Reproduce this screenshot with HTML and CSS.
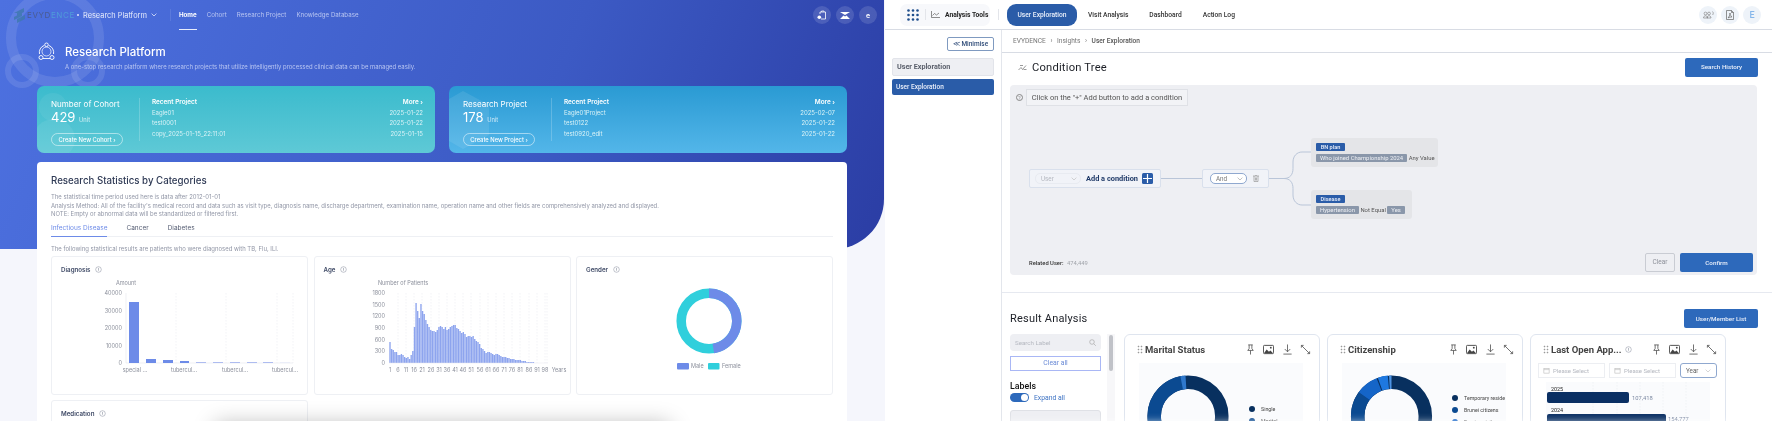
FILE: index.html
```html
<!DOCTYPE html>
<html lang="en">
<head>
    <meta charset="UTF-8">
    <meta name="viewport" content="width=device-width, initial-scale=1.0">
    <title>Research Platform and Condition Tree</title>
    <link rel="stylesheet" href="styles.css">
</head>
<body>
    <svg class="sprites" width="0" height="0">
        <symbol id="i-pin" viewBox="0 0 12 12"><path d="M3.5 1h5M4.5 1v4L3 7h6L7.5 5V1M6 7v4.5" fill="none" stroke="#555" stroke-width=".9"/></symbol>
        <symbol id="i-image" viewBox="0 0 12 12"><rect x=".5" y="1.5" width="11" height="9" rx="1" fill="#fff" stroke="#444"/><path d="M1 10l3-4 2.5 2.500L8 7l3 3z" fill="#444"/><circle cx="8.5" cy="4" r="1" fill="#444"/></symbol>
        <symbol id="i-down" viewBox="0 0 12 12"><path d="M6 .5v8M3 5.5l3 3 3-3M1.5 11h9" fill="none" stroke="#555" stroke-width=".9"/></symbol>
        <symbol id="i-expand" viewBox="0 0 12 12"><path d="M1.5 1.5l9 9M1.5 4V1.5H4M10.5 8v2.500H8" fill="none" stroke="#555" stroke-width=".9"/></symbol>
        <symbol id="i-handle" viewBox="0 0 6 9"><path d="M1 1h1v1H1zM4 1h1v1H4zM1 4h1v1H1zM4 4h1v1H4zM1 7h1v1H1zM4 7h1v1H4z" fill="#999" stroke="#999" stroke-width=".5"/></symbol>
        <symbol id="i-info" viewBox="0 0 8 8"><circle cx="4" cy="4" r="3.2" fill="none" stroke="#8a90a0" stroke-width=".6"/><path d="M4 2.200v3.200" stroke="#8a90a0" stroke-width=".7"/></symbol>
        <symbol id="i-cal" viewBox="0 0 8 8"><rect x="1" y="1.5" width="6" height="5.5" fill="none" stroke="#bbb" stroke-width=".7"/><path d="M1 3h6" stroke="#bbb" stroke-width=".7"/></symbol>
    </svg>

    <section class="portal">
        <div class="hero">
            <svg class="hero-rings" viewBox="0 0 150 110" width="150" height="110">
                <g fill="none" stroke="#fff" stroke-opacity=".1">
                    <circle cx="55" cy="38" r="44" stroke-width="10"/>
                    <circle cx="22" cy="71" r="14" stroke-width="6"/>
                    <circle cx="88" cy="71" r="14" stroke-width="6"/>
                </g>
            </svg>
        </div>

        <header class="pnav">
            <svg class="plogo" width="11" height="15" viewBox="0 0 11 15"><path d="M0 5l10-5v4L3 7.5V5zM0 9l8-4v3l-8 4zM3 11l8-4v4l-8 4z" fill="#3f78b0" fill-opacity=".85"/></svg>
            <span class="pbrand"><b>EVYD</b>ENCE</span>
            <span class="pdot"></span>
            <span class="pproduct">Research Platform</span>
            <svg class="pchev" width="6" height="4" viewBox="0 0 6 4"><path d="M.6.6L3 3l2.4-2.400" fill="none" stroke="#dfe6fb" stroke-width=".8"/></svg>
            <span class="pdivider"></span>
            <nav class="plinks">
                <a class="plink active">Home</a>
                <a class="plink">Cohort</a>
                <a class="plink">Research Project</a>
                <a class="plink">Knowledge Database</a>
            </nav>
            <div class="pround-group">
                <span class="pround"><svg width="10" height="10" viewBox="0 0 10 10"><path d="M3 4V2h5.500v7H4" fill="none" stroke="#fff" stroke-width=".8"/><path d="M4.5 2V1h2.500v1" fill="none" stroke="#fff" stroke-width=".7"/><circle cx="2.3" cy="7.3" r="1.8" fill="#fff"/></svg></span>
                <span class="pround"><svg width="10" height="7" viewBox="0 0 10 7"><path d="M0 0h10L5 3zM0 7l3.500-3.500L5 4.500l1.500-1L10 7z" fill="#fff"/></svg></span>
                <span class="pround">e</span>
            </div>
        </header>

        <div class="hero-head">
            <svg width="19" height="19" viewBox="0 0 19 19" fill="none" stroke="#fff" stroke-width=".9">
                <path d="M7 3.500A7.500 7.500 0 0 0 2.500 12M12 3.500A7.500 7.500 0 0 1 16.500 12M6 16.500h7"/>
                <circle cx="9.5" cy="2.8" r="1.8"/><circle cx="4" cy="15.5" r="2"/><circle cx="15" cy="15.5" r="2"/>
                <circle cx="9.5" cy="9.5" r="4.5" stroke-opacity=".8"/>
            </svg>
            <div>
                <h1 class="hero-title">Research Platform</h1>
                <p class="hero-sub">A one-stop research platform where research projects that utilize intelligently processed clinical data can be managed easily.</p>
            </div>
        </div>

        <div class="stat-row">
            <div class="stat-card cohort">
                <div class="stat-left">
                    <div class="stat-name">Number of Cohort</div>
                    <div class="stat-num">429 <small>Unit</small></div>
                    <span class="stat-btn">Create New Cohort ›</span>
                </div>
                <span class="stat-line"></span>
                <div class="stat-right">
                    <div class="stat-rowline head"><span>Recent Project</span><span>More ›</span></div>
                    <div class="stat-rowline"><span>Eagle01</span><span>2025-01-22</span></div>
                    <div class="stat-rowline"><span>test0001</span><span>2025-01-22</span></div>
                    <div class="stat-rowline"><span>copy_2025-01-15_22:11:01</span><span>2025-01-15</span></div>
                </div>
            </div>
            <div class="stat-card project">
                <svg class="stat-hex" width="40" height="58" viewBox="0 0 40 58"><path d="M14 0l26 14v30L14 58 0 50V8z" fill="#fff" fill-opacity=".09"/></svg>
                <div class="stat-left">
                    <div class="stat-name">Research Project</div>
                    <div class="stat-num">178 <small>Unit</small></div>
                    <span class="stat-btn">Create New Project ›</span>
                </div>
                <span class="stat-line"></span>
                <div class="stat-right">
                    <div class="stat-rowline head"><span>Recent Project</span><span>More ›</span></div>
                    <div class="stat-rowline"><span>Eagle01Project</span><span>2025-02-07</span></div>
                    <div class="stat-rowline"><span>test0122</span><span>2025-01-22</span></div>
                    <div class="stat-rowline"><span>test0920_edit</span><span>2025-01-22</span></div>
                </div>
            </div>
        </div>

        <div class="stats-panel">
            <h2 class="stats-title">Research Statistics by Categories</h2>
            <p class="stats-notes">The statistical time period used here is data after 2012-01-01<br>
            Analysis Method: All of the facility's medical record and data such as visit type, diagnosis name, discharge department, examination name, operation name and other fields are comprehensively analyzed and displayed.<br>
            NOTE: Empty or abnormal data will be standardized or filtered first.</p>
            <div class="stats-tabs">
                <span class="stats-tab active">Infectious Disease</span>
                <span class="stats-tab">Cancer</span>
                <span class="stats-tab">Diabetes</span>
            </div>
            <p class="stats-caption">The following statistical results are patients who were diagnosed with TB, Flu, ILI.</p>
            <div class="chart-grid">
                <div class="chart-card">
                    <div class="chart-name">Diagnosis <svg width="7" height="7"><use href="#i-info"/></svg></div>
                    <svg class="chart-svg" viewBox="52 276 255 118" width="255" height="118">
                        <path stroke="#e4e6ec" stroke-width=".5" stroke-dasharray="1.5 1.5" d="M176 293v70M226 293v70M277 293v70M293 293v70"/>
                        <path d="M126 293v70h167" fill="none" stroke="#e4e6ec" stroke-width=".6"/>
                        <g fill="#6d8be8">
                            <rect x="129" y="302" width="10" height="61"/>
                            <rect x="146" y="359" width="10" height="4"/>
                            <rect x="163" y="360" width="10" height="3"/>
                            <rect x="180" y="361" width="9" height="2"/>
                        </g>
                        <g fill="#aebcf0">
                            <rect x="196" y="362" width="10" height="1"/>
                            <rect x="213" y="362" width="10" height="1"/>
                            <rect x="230" y="362" width="10" height="1"/>
                            <rect x="247" y="362" width="10" height="1"/>
                            <rect x="263" y="362" width="10" height="1"/>
                            <rect x="280" y="362.5" width="10" height=".5" fill="#dfe4f8"/>
                        </g>
                        <g class="axis-text">
                            <text x="126" y="285" text-anchor="middle">Amount</text>
                            <g text-anchor="end">
                                <text x="122" y="295">40000</text>
                                <text x="122" y="312.5">30000</text>
                                <text x="122" y="330">20000</text>
                                <text x="122" y="347.5">10000</text>
                                <text x="122" y="365">0</text>
                            </g>
                            <g text-anchor="middle">
                                <text x="135" y="372">special ...</text>
                                <text x="184" y="372">tubercul...</text>
                                <text x="235" y="372">tubercul...</text>
                                <text x="285" y="372">tubercul...</text>
                            </g>
                        </g>
                    </svg>
                </div>
                <div class="chart-card">
                    <div class="chart-name">Age <svg width="7" height="7"><use href="#i-info"/></svg></div>
                    <svg class="chart-svg" viewBox="314 276 255 118" width="255" height="118">
                        <path stroke="#e4e6ec" stroke-width=".5" stroke-dasharray="1.5 1.5" d="M397 293v70M405 293v70M413 293v70M421 293v70M430 293v70M438 293v70M446 293v70M454 293v70M462 293v70M470 293v70M479 293v70M487 293v70M495 293v70M503 293v70M511 293v70M519 293v70M528 293v70M536 293v70M544 293v70M546 293v70"/>
                        <path stroke="#8da4ee" stroke-width="1.35" fill="none" d="M389 363v-21m1.63 21v-14m1.63 14v-13m1.63 13v-11m1.63 11v-11m1.63 11v-8m1.63 8v-8m1.63 8v-9m1.63 9v-8m1.63 8v-6m1.63 6v-5m1.63 5v-6m1.63 6v-4m1.63 4v-8m1.63 8v-12m1.63 12v-36m1.63 36v-60m1.63 60v-52m1.63 52v-45m1.63 45v-59m1.63 59v-52m1.63 52v-49m1.63 49v-43m1.63 43v-39m1.63 39v-36m1.63 36v-33m1.63 33v-32m1.63 32v-32m1.63 32v-31m1.63 31v-33m1.63 33v-36m1.63 36v-37m1.63 37v-36m1.63 36v-34m1.63 34v-36m1.63 36v-33m1.63 33v-34m1.63 34v-36m1.63 36v-37m1.63 37v-38m1.63 38v-38m1.63 38v-35m1.63 35v-34m1.63 34v-32m1.63 32v-30m1.63 30v-31m1.63 31v-29m1.63 29v-26m1.63 26v-27m1.63 27v-27m1.63 27v-26m1.63 26v-27m1.63 27v-24m1.63 24v-22m1.63 22v-21m1.63 21v-19m1.63 19v-15m1.63 15v-14m1.63 14v-12m1.63 12v-10m1.63 10v-11m1.63 11v-11m1.63 11v-10m1.63 10v-9m1.63 9v-8m1.63 8v-9m1.63 9v-9m1.63 9v-8m1.63 8v-7m1.63 7v-6m1.63 6v-6m1.63 6v-6m1.63 6v-5m1.63 5v-5m1.63 5v-4m1.63 4v-4m1.63 4v-4m1.63 4v-3m1.63 3v-3m1.63 3v-3m1.63 3v-3m1.63 3v-2m1.63 2v-2m1.63 2v-2m1.63 2v-1m1.63 1v-1m1.63 1v-1m1.63 1v-1m1.63 1v-1"/>
                        <path d="M388 363h159" stroke="#e4e6ec" stroke-width=".5"/>
                        <g class="axis-text">
                            <text x="402" y="285" text-anchor="middle">Number of Patients</text>
                            <g text-anchor="end">
                                <text x="384" y="295">1800</text>
                                <text x="384" y="306.7">1500</text>
                                <text x="384" y="318.3">1200</text>
                                <text x="384" y="330">900</text>
                                <text x="384" y="341.5">600</text>
                                <text x="384" y="353.2">300</text>
                                <text x="384" y="365">0</text>
                            </g>
                            <g text-anchor="middle">
                                <text x="389" y="372">1</text><text x="397" y="372">6</text><text x="405" y="372">11</text><text x="413" y="372">16</text><text x="421" y="372">21</text><text x="430" y="372">26</text><text x="438" y="372">31</text><text x="446" y="372">36</text><text x="454" y="372">41</text><text x="462" y="372">46</text><text x="470" y="372">51</text><text x="479" y="372">56</text><text x="487" y="372">61</text><text x="495" y="372">66</text><text x="503" y="372">71</text><text x="511" y="372">76</text><text x="519" y="372">81</text><text x="528" y="372">86</text><text x="536" y="372">91</text><text x="544" y="372">98</text><text x="558" y="372">Years</text>
                            </g>
                        </g>
                    </svg>
                </div>
                <div class="chart-card">
                    <div class="chart-name">Gender <svg width="7" height="7"><use href="#i-info"/></svg></div>
                    <svg class="chart-svg" viewBox="577 276 255 118" width="255" height="118">
                        <circle cx="709" cy="321" r="27.8" fill="none" stroke="#30cfdc" stroke-width="9.5"/>
                        <circle cx="709" cy="321" r="27.8" fill="none" stroke="#6d8be8" stroke-width="9.5" pathLength="100" stroke-dasharray="47.5 100" transform="rotate(-90 709 321)"/>
                        <rect x="677" y="363" width="12" height="6.5" rx="1" fill="#6d8be8"/>
                        <rect x="708" y="363" width="11.5" height="6.5" rx="1" fill="#30cfdc"/>
                        <g class="axis-text">
                            <text x="691" y="368">Male</text>
                            <text x="722" y="368">Female</text>
                        </g>
                    </svg>
                </div>
                <div class="chart-card">
                    <div class="chart-name">Medication <svg width="7" height="7"><use href="#i-info"/></svg></div>
                </div>
            </div>
        </div>
        <div class="shade-grey"></div>
    </section>

    <section class="insight">
        <header class="inav">
            <div class="tool-chip">
                <svg width="12" height="12" viewBox="0 0 12 12" fill="#1f4e8c"><circle cx="1.5" cy="1.5" r="1.3"/><circle cx="6" cy="1.5" r="1.3"/><circle cx="10.5" cy="1.5" r="1.3"/><circle cx="1.5" cy="6" r="1.3"/><circle cx="6" cy="6" r="1.3"/><circle cx="10.5" cy="6" r="1.3"/><circle cx="1.5" cy="10.5" r="1.3"/><circle cx="6" cy="10.5" r="1.3"/><circle cx="10.5" cy="10.5" r="1.3"/></svg>
                <span class="tool-sep"></span>
                <svg width="9" height="7" viewBox="0 0 9 7" fill="none" stroke="#444" stroke-width=".6"><path d="M.5 0v6.5H9M1.5 4.5l2-2 2 1.5L8 2"/></svg>
                <b>Analysis Tools</b>
            </div>
            <span class="inav-sep"></span>
            <a class="inav-link active">User Exploration</a>
            <a class="inav-link">Visit Analysis</a>
            <a class="inav-link">Dashboard</a>
            <a class="inav-link">Action Log</a>
            <div class="iround-group">
                <span class="iround"><svg width="11" height="8" viewBox="0 0 11 8" fill="none" stroke="#777" stroke-width=".6"><circle cx="2.5" cy="2.5" r="1.4"/><circle cx="6" cy="2.5" r="1.4"/><path d="M.5 7c0-3 4-3 4 0zM4 7c0-3 4-3 4 0z"/><path d="M9.5 .5c1 1 1 2.5 0 3.5"/></svg></span>
                <span class="iround"><svg width="8" height="10" viewBox="0 0 8 10" fill="none" stroke="#666" stroke-width=".7"><path d="M.5.5h5l2 2v7h-7zM5.5.5v2h2M2 8c1-1 2-3 2-5 0 2 1 3 2 4-1 0-3 0-4 1z"/></svg></span>
                <span class="iround letter">E</span>
            </div>
        </header>
        <div class="ibody">
            <aside class="iside">
                <span class="minimise">≪ Minimise</span>
                <div class="side-group">User Exploration</div>
                <div class="side-item">User Exploration</div>
            </aside>
            <main class="imain">
                <div class="crumbs">EVYDENCE <i>›</i> Insights <i>›</i> <b>User Exploration</b></div>
                <div class="tree-head">
                    <svg width="9" height="7" viewBox="0 0 9 7" fill="none" stroke="#555" stroke-width=".6"><path d="M.5 6L3 3.5l1.5 2L8 1.5M2 1.5h3M5.5 5.5h3"/></svg>
                    <h2>Condition Tree</h2>
                    <span class="blue-btn history">Search History</span>
                </div>
                <div class="tree-panel">
                    <div class="tree-hint">
                        <span class="help-dot">?</span>
                        <span class="hint-box">Click on the "+" Add button to add a condition</span>
                    </div>
                    <div class="tree-canvas">
                        <svg class="tree-lines" width="747" height="147" viewBox="0 0 747 147" fill="none" stroke="#b9c5d8" stroke-width="1">
                            <path d="M150 72.5h42M259 72.5h15c6 0 9-4 9-10V56c0-6 4-10 9-10h9M274 72.5c6 0 9 4 9 10V89c0 6 4 10 9 10h9"/>
                        </svg>
                        <div class="tree-node add-node">
                            <span class="mini-select dim">User <svg width="6" height="4" viewBox="0 0 6 4"><path d="M.6.6L3 3l2.4-2.400" fill="none" stroke="#bbb" stroke-width=".6"/></svg></span>
                            <b>Add a condition</b>
                            <span class="plus-btn"><svg width="9" height="9" viewBox="0 0 9 9"><path d="M4.5 0v9M0 4.5h9" stroke="#fff" stroke-width="1.2"/></svg></span>
                        </div>
                        <div class="tree-node and-node">
                            <span class="mini-select and">And <svg width="6" height="4" viewBox="0 0 6 4"><path d="M.6.6L3 3l2.4-2.400" fill="none" stroke="#999" stroke-width=".6"/></svg></span>
                            <svg width="6" height="7" viewBox="0 0 6 7" fill="none" stroke="#999" stroke-width=".7"><path d="M0 1h6M1 1v5.500h4V1M2 .3h2M2.500 2.500v3M3.500 2.500v3"/></svg>
                        </div>
                        <div class="cond-group first">
                            <span class="cond-tag">BN plan</span>
                            <div class="cond-line"><span class="cond-grey">Who joined Championship 2024</span> Any Value</div>
                        </div>
                        <div class="cond-group second">
                            <span class="cond-tag">Disease</span>
                            <div class="cond-line"><span class="cond-grey">Hypertension</span> Not Equal <span class="cond-grey">Yes</span></div>
                        </div>
                    </div>
                    <div class="tree-foot">
                        <span class="related"><b>Related User:</b> 474,449</span>
                        <span class="clear-btn">Clear</span>
                        <span class="blue-btn confirm">Confirm</span>
                    </div>
                </div>
                <div class="result-head">
                    <h2>Result Analysis</h2>
                    <span class="blue-btn member">User/Member List</span>
                </div>
                <div class="result-body">
                    <div class="label-col">
                        <div class="label-search">Search Label <svg width="7" height="7" viewBox="0 0 7 7" fill="none" stroke="#aaa" stroke-width=".7"><circle cx="3" cy="3" r="2.3"/><path d="M4.7 4.7L6.800 6.800"/></svg></div>
                        <div class="label-clear">Clear all</div>
                        <div class="label-title">Labels</div>
                        <div class="label-toggle"><span class="toggle"></span> Expand all</div>
                        <div class="label-box"></div>
                    </div>
                    <div class="label-scroll"><span></span></div>
                    <div class="result-card">
                        <div class="result-name">
                            <svg width="6" height="9"><use href="#i-handle"/></svg>
                            <b>Marital Status</b>
                            <div class="result-tools">
                                <svg width="11" height="11"><use href="#i-pin"/></svg><svg width="11" height="11"><use href="#i-image"/></svg><svg width="11" height="11"><use href="#i-down"/></svg><svg width="11" height="11"><use href="#i-expand"/></svg>
                            </div>
                        </div>
                        <div class="result-chart">
                            <svg viewBox="1140 363 164 58" width="164" height="58">
                                <g fill="none" stroke-width="13.5" transform="rotate(-90 1189 416)" >
                                    <circle cx="1189" cy="416" r="33.8" stroke="#08305f"/>
                                    <circle cx="1189" cy="416" r="33.8" stroke="#0b4a91" pathLength="100" stroke-dasharray="49 100" stroke-dashoffset="-49"/>
                                    <circle cx="1189" cy="416" r="33.8" stroke="#2f78cc" pathLength="100" stroke-dasharray="2 100" stroke-dashoffset="-97"/>
                                </g>
                                <circle cx="1253" cy="409" r="3" fill="#08305f"/><circle cx="1253" cy="421" r="3" fill="#0b4a91"/>
                                <text class="legend-text" x="1262" y="411">Single</text>
                                <text class="legend-text" x="1262" y="423">Marital</text>
                            </svg>
                        </div>
                    </div>
                    <div class="result-card">
                        <div class="result-name">
                            <svg width="6" height="9"><use href="#i-handle"/></svg>
                            <b>Citizenship</b>
                            <div class="result-tools">
                                <svg width="11" height="11"><use href="#i-pin"/></svg><svg width="11" height="11"><use href="#i-image"/></svg><svg width="11" height="11"><use href="#i-down"/></svg><svg width="11" height="11"><use href="#i-expand"/></svg>
                            </div>
                        </div>
                        <div class="result-chart">
                            <svg viewBox="1343 363 164 58" width="164" height="58">
                                <g fill="none" stroke-width="13.5" transform="rotate(-90 1392.5 416)">
                                    <circle cx="1392.5" cy="416" r="33.8" stroke="#08305f"/>
                                    <circle cx="1392.5" cy="416" r="33.8" stroke="#0b4a91" pathLength="100" stroke-dasharray="35 100" stroke-dashoffset="-50"/>
                                    <circle cx="1392.5" cy="416" r="33.8" stroke="#1565c8" pathLength="100" stroke-dasharray="9 100" stroke-dashoffset="-85"/>
                                    <circle cx="1392.5" cy="416" r="33.8" stroke="#1e78e0" pathLength="100" stroke-dasharray="4 100" stroke-dashoffset="-94.5"/>
                                    <circle cx="1392.5" cy="416" r="33.8" stroke="#4d94e6" pathLength="100" stroke-dasharray="1 100" stroke-dashoffset="-99"/>
                                </g>
                                <circle cx="1456" cy="398" r="3" fill="#08305f"/><circle cx="1456" cy="410" r="3" fill="#0b4a91"/><circle cx="1456" cy="422" r="3" fill="#1565c8"/>
                                <text class="legend-text" x="1465" y="400">Temporary reside</text>
                                <text class="legend-text" x="1465" y="412">Brunei citizens</text>
                                <text class="legend-text" x="1465" y="424">Foreign visitors</text>
                            </svg>
                        </div>
                    </div>
                    <div class="result-card">
                        <div class="result-name">
                            <svg width="6" height="9"><use href="#i-handle"/></svg>
                            <b>Last Open App...</b>
                            <svg width="7" height="7"><use href="#i-info"/></svg>
                            <div class="result-tools">
                                <svg width="11" height="11"><use href="#i-pin"/></svg><svg width="11" height="11"><use href="#i-image"/></svg><svg width="11" height="11"><use href="#i-down"/></svg><svg width="11" height="11"><use href="#i-expand"/></svg>
                            </div>
                        </div>
                        <div class="date-row">
                            <span class="date-box"><svg width="7" height="7"><use href="#i-cal"/></svg> Please Select</span>
                            <span class="date-box"><svg width="7" height="7"><use href="#i-cal"/></svg> Please Select</span>
                            <span class="year-box">Year <svg width="6" height="4" viewBox="0 0 6 4"><path d="M.6.6L3 3l2.4-2.400" fill="none" stroke="#bbb" stroke-width=".6"/></svg></span>
                        </div>
                        <div class="result-chart bars">
                            <svg viewBox="1547 382 164 39" width="164" height="39">
                                <path d="M1594 382v39M1618 382v39M1641 382v39M1664 382v39M1687 382v39" stroke="#e6e8ee" stroke-width=".5" stroke-dasharray="1.5 1.5"/>
                                <rect x="1548" y="392" width="82" height="11" rx="2" fill="#0a2f63"/>
                                <rect x="1548" y="414" width="119" height="11" rx="2" fill="#0a2f63"/>
                                <text class="bar-year" x="1552" y="390.5">2025</text>
                                <text class="bar-year" x="1552" y="411.5">2024</text>
                                <text class="bar-value" x="1633" y="400">107,418</text>
                                <text class="bar-value" x="1669" y="421">154,777</text>
                            </svg>
                        </div>
                    </div>
                </div>
            </main>
        </div>
        <div class="shade-white"></div>
    </section>
</body>
</html>
```

FILE: styles.css
```css
* {
    box-sizing: border-box;
}
html, body {
    margin: 0;
    height: 421px;
    overflow: hidden;
}
body {
    display: flex;
    background-color: #fff;
}
h1, h2, p {
    margin: 0;
    font-weight: normal;
}
.sprites {
    position: absolute;
}

/* left screen */
.portal {
    position: relative;
    flex: 0 0 885px;
    height: 421px;
    overflow: hidden;
    background-color: #f5f6fc;
    font-family: Inter, sans-serif;
    filter: blur(.35px);
}
.hero {
    position: absolute;
    left: 0;
    top: 0;
    width: 884px;
    height: 249px;
    overflow: hidden;
    background: linear-gradient(112deg, #4d71e0 0%, #3c5ac4 60%, #2b3da4 100%);
    border-bottom-right-radius: 50px;
}
.hero-rings {
    position: absolute;
    left: 0;
    top: 0;
}
.pnav {
    position: relative;
    display: flex;
    align-items: center;
    height: 30px;
    padding: 0 8px 0 14px;
    color: #fff;
}
.pbrand {
    width: 46px;
    margin-left: 2px;
    font-size: 8px;
    letter-spacing: .6px;
    color: #4f9bd9;
    white-space: nowrap;
}
.pbrand b {
    font-weight: 400;
    color: #4a5c92;
}
.pdot {
    width: 2px;
    height: 2px;
    margin: 0 4px 0 4px;
    border-radius: 50%;
    background-color: #dfe6fb;
}
.pproduct {
    font-size: 7.4px;
    color: #e7ecfc;
}
.pchev {
    margin-left: 4px;
}
.pdivider {
    width: 1px;
    height: 12px;
    margin: 0 8px 0 13px;
    background-color: rgba(255, 255, 255, .1);
}
.plinks {
    display: flex;
    gap: 10px;
    height: 30px;
}
.plink {
    line-height: 29px;
    font-size: 6.2px;
    color: #b9c6f2;
}
.plink.active {
    height: 29.5px;
    border-bottom: 1px solid #e8edfc;
    font-weight: 700;
    color: #fff;
}
.pround-group {
    display: flex;
    gap: 5px;
    margin-left: auto;
}
.pround {
    display: flex;
    align-items: center;
    justify-content: center;
    width: 18px;
    height: 18px;
    border-radius: 50%;
    background-color: rgba(255, 255, 255, .13);
    font-size: 7px;
    font-weight: 600;
}
.hero-head {
    position: relative;
    display: flex;
    gap: 9px;
    padding: 12px 0 0 37px;
    color: #fff;
}
.hero-title {
    margin-top: 2px;
    line-height: 16px;
    font-size: 11.5px;
    font-weight: 500;
}
.hero-sub {
    margin-top: 3px;
    line-height: 8px;
    font-size: 5.95px;
    color: #b9c6f2;
}
.stat-row {
    position: relative;
    display: flex;
    gap: 14px;
    padding-left: 37px;
    margin-top: 15px;
}
.stat-card {
    position: relative;
    display: flex;
    width: 398px;
    height: 67px;
    overflow: hidden;
    border-radius: 7px;
    color: #fff;
}
.stat-card.cohort {
    background: linear-gradient(180deg, #3bbbcd, #5ec9d6);
}
.stat-card.project {
    background: linear-gradient(180deg, #2a9ad3, #53b6e9);
}
.stat-card.cohort::before {
    content: "";
    position: absolute;
    left: 2px;
    top: 7px;
    width: 28px;
    height: 28px;
    border-radius: 50%;
    background-color: rgba(255, 255, 255, .06);
}
.stat-card.cohort::after {
    content: "";
    position: absolute;
    left: -4px;
    top: 33px;
    width: 42px;
    height: 40px;
    border-radius: 50%;
    background-color: rgba(255, 255, 255, .07);
}
.stat-hex {
    position: absolute;
    left: 0;
    top: 5px;
}
.stat-left {
    position: relative;
    z-index: 1;
    flex: 0 0 102px;
    padding: 12px 0 0 14px;
}
.stat-name {
    line-height: 12px;
    font-size: 8px;
    white-space: nowrap;
}
.stat-num {
    line-height: 15px;
    font-size: 13px;
    font-weight: 400;
}
.stat-num small {
    font-size: 5.8px;
    opacity: .75;
}
.stat-btn {
    display: block;
    width: 72px;
    height: 13px;
    margin-top: 6px;
    border: 1px solid rgba(255, 255, 255, .5);
    border-radius: 7px;
    line-height: 11px;
    text-align: center;
    font-size: 5.8px;
    font-weight: 500;
    white-space: nowrap;
}
.stat-line {
    flex: 0 0 1px;
    height: 43px;
    margin-top: 12px;
    background-color: rgba(255, 255, 255, .2);
}
.stat-right {
    flex: 1;
    padding: 11px 12px 0;
}
.stat-rowline {
    display: flex;
    justify-content: space-between;
    line-height: 10.7px;
    font-size: 6px;
    color: #d9f2f6;
}
.stat-rowline.head {
    font-size: 6.4px;
    font-weight: 600;
    color: #fff;
}
.stats-panel {
    position: relative;
    width: 810px;
    margin: 9px 0 0 37px;
    padding: 13px 14px 0;
    border-radius: 4px 4px 0 0;
    background-color: #fff;
}
.stats-title {
    line-height: 12px;
    font-size: 9.7px;
    font-weight: 500;
    color: #2f3a55;
}
.stats-notes {
    margin-top: 6px;
    line-height: 8.6px;
    font-size: 5.93px;
    color: #9196a6;
    white-space: nowrap;
}
.stats-tabs {
    display: flex;
    gap: 19px;
    height: 18px;
    border-bottom: 1px solid #eef0f4;
}
.stats-tab {
    height: 18px;
    line-height: 18px;
    font-size: 6.5px;
    color: #545c72;
}
.stats-tab.active {
    border-bottom: 1px solid #6d8be8;
    color: #6d8be8;
}
.stats-caption {
    margin-top: 8px;
    line-height: 8px;
    font-size: 5.95px;
    color: #9196a6;
}
.chart-grid {
    display: grid;
    grid-template-columns: repeat(3, 257px);
    grid-auto-rows: 139px;
    gap: 5px 5.5px;
    margin-top: 3px;
}
.chart-card {
    border: 1px solid #eef0f4;
    border-radius: 3px;
}
.chart-name {
    display: flex;
    align-items: center;
    gap: 5px;
    height: 19px;
    padding: 8px 0 1px 9px;
    line-height: 10px;
    font-size: 6.2px;
    font-weight: 600;
    color: #3f4a66;
}
.chart-svg {
    display: block;
}
.axis-text text {
    font-family: Inter, sans-serif;
    font-size: 5.5px;
    fill: #8b8f9b;
}
.shade-grey {
    position: absolute;
    left: 215px;
    top: 424px;
    width: 455px;
    height: 30px;
    box-shadow: 0 0 22px rgba(0, 0, 0, .28);
}

/* right screen */
.insight {
    position: relative;
    flex: 0 0 887px;
    height: 421px;
    overflow: hidden;
    background-color: #fff;
    font-family: Roboto, sans-serif;
    filter: blur(.35px);
}
.inav {
    display: flex;
    align-items: center;
    height: 30px;
    padding: 0 11px 0 15px;
    border-bottom: 1px solid #d8dce4;
}
.tool-chip {
    display: flex;
    align-items: center;
    width: 90px;
    height: 22px;
    padding-left: 7px;
    border-radius: 7px;
    background-color: #f7f8fb;
    font-size: 6.7px;
    color: #222;
}
.tool-chip b {
    margin-left: 5px;
    font-weight: 700;
    white-space: nowrap;
}
.tool-sep {
    width: 1px;
    height: 11px;
    margin: 0 5px 0 6px;
    background-color: #e3e5ea;
}
.inav-sep {
    width: 1px;
    height: 11px;
    margin: 0 8px;
    background-color: #e3e5ea;
}
.inav-link {
    display: flex;
    align-items: center;
    height: 22px;
    margin-right: 21px;
    font-size: 6.7px;
    font-weight: 500;
    color: #333;
    white-space: nowrap;
}
.inav-link.active {
    width: 70px;
    justify-content: center;
    margin-right: 11px;
    border-radius: 9px;
    background-color: #2a5ca8;
    color: #e9effa;
}
.iround-group {
    display: flex;
    gap: 4px;
    margin-left: auto;
}
.iround {
    display: flex;
    align-items: center;
    justify-content: center;
    width: 18px;
    height: 18px;
    border-radius: 50%;
    background-color: #eef3f9;
}
.iround.letter {
    font-size: 9px;
    font-weight: 500;
    color: #86b6ea;
}
.ibody {
    display: flex;
    height: 391px;
}
.iside {
    flex: 0 0 117px;
    display: flex;
    flex-direction: column;
    padding: 7px 7px 0 7px;
    border-right: 1px solid #e3e6ec;
}
.minimise {
    align-self: flex-end;
    width: 47px;
    height: 14px;
    border: 1px solid #7f9ac0;
    border-radius: 2px;
    line-height: 12px;
    text-align: center;
    font-size: 6.5px;
    font-weight: 500;
    color: #34507c;
}
.side-group {
    height: 18px;
    margin-top: 7px;
    padding-left: 4px;
    border: 1px solid #e2e4ea;
    border-radius: 2px;
    background-color: #eeeff3;
    line-height: 16px;
    font-size: 7.2px;
    font-weight: 700;
    color: #5a5f6b;
}
.side-item {
    height: 16px;
    margin-top: 3px;
    padding-left: 4px;
    border-radius: 2px;
    background-color: #2a5ca8;
    line-height: 16px;
    font-size: 6.5px;
    font-weight: 500;
    color: #e9effa;
}
.imain {
    flex: 1;
    min-width: 0;
}
.crumbs {
    height: 23px;
    padding: 0 0 0 11px;
    border-bottom: 1px solid #d8dce4;
    line-height: 22px;
    font-size: 6.6px;
    color: #777;
}
.crumbs i {
    margin: 0 3px;
    font-style: normal;
}
.crumbs b {
    font-weight: 500;
    color: #555;
}
.tree-head {
    display: flex;
    align-items: center;
    height: 32px;
    padding: 0 14px 4px 16px;
}
.tree-head h2 {
    margin-left: 5px;
    font-size: 11.2px;
    letter-spacing: .2px;
    color: #1c1f26;
}
.blue-btn {
    display: flex;
    align-items: center;
    justify-content: center;
    height: 19px;
    border-radius: 2px;
    background-color: #2d69bb;
    font-size: 6.25px;
    font-weight: 500;
    color: #e9effa;
}
.history {
    width: 73px;
    margin-left: auto;
}
.tree-panel {
    display: flex;
    flex-direction: column;
    width: 747px;
    height: 190px;
    margin-left: 8px;
    padding: 4px 0 3px;
    border-radius: 4px;
    background-color: #eeeff3;
}
.tree-hint {
    display: flex;
    align-items: center;
    gap: 3px;
    height: 17px;
    margin-left: 6px;
}
.help-dot {
    width: 7px;
    height: 7px;
    border: .6px solid #888;
    border-radius: 50%;
    line-height: 6px;
    text-align: center;
    font-size: 5px;
    color: #888;
}
.hint-box {
    width: 162px;
    height: 17px;
    border: 1px solid #dfe1e6;
    background-color: #f2f3f6;
    line-height: 15px;
    text-align: center;
    font-size: 7.5px;
    color: #555;
    white-space: nowrap;
}
.tree-canvas {
    position: relative;
    height: 147px;
}
.tree-lines {
    position: absolute;
    left: 0;
    top: 0;
}
.tree-node {
    position: absolute;
    top: 63px;
    height: 19px;
    display: flex;
    align-items: center;
    border: 1px solid #d9e0ec;
    border-radius: 2px;
    background-color: #f1f3f8;
}
.add-node {
    left: 19px;
    width: 132px;
    padding: 0 5px;
    font-size: 7.4px;
    color: #1f3a68;
}
.add-node b {
    margin-left: 5px;
    white-space: nowrap;
}
.and-node {
    left: 192px;
    width: 67px;
    padding: 0 7px;
    gap: 6px;
}
.mini-select {
    display: flex;
    align-items: center;
    justify-content: space-between;
    height: 11px;
    padding: 0 3px 0 5px;
    border-radius: 5px;
    font-size: 6.3px;
}
.mini-select.dim {
    width: 46px;
    border: 1px solid #e8ebf1;
    color: #b5b8c0;
}
.mini-select.and {
    width: 37px;
    border: 1px solid #8fa8cf;
    background-color: #fff;
    color: #777;
}
.plus-btn {
    display: flex;
    align-items: center;
    justify-content: center;
    width: 11px;
    height: 11px;
    margin-left: 4px;
    border-radius: 1.5px;
    background-color: #2a5ca8;
}
.cond-group {
    position: absolute;
    left: 301px;
    height: 29px;
    padding: 5px 5px 0;
    border-radius: 3px;
    background-color: #e4e5e8;
}
.cond-group.first {
    top: 32px;
    width: 127px;
}
.cond-group.second {
    top: 84px;
    width: 101px;
}
.cond-tag {
    display: block;
    width: 29px;
    height: 8px;
    border-radius: 1px;
    background-color: #2a5ca8;
    line-height: 8px;
    text-align: center;
    font-size: 5.6px;
    font-weight: 500;
    color: #e9effa;
}
.cond-line {
    margin-top: 3px;
    line-height: 8px;
    font-size: 5.9px;
    color: #555;
    white-space: nowrap;
}
.cond-grey {
    display: inline-block;
    padding: 0 4px;
    border-radius: 1px;
    background-color: #8a97aa;
    color: #eef0f4;
}
.tree-foot {
    display: flex;
    align-items: center;
    height: 19px;
    padding: 0 4px 0 19px;
}
.related {
    font-size: 5.8px;
    color: #a0a3aa;
}
.related b {
    margin-right: 2px;
    font-weight: 500;
    color: #333;
}
.clear-btn {
    width: 30px;
    height: 19px;
    margin-left: auto;
    border: 1px solid #c9ccd3;
    border-radius: 2px;
    line-height: 17px;
    text-align: center;
    font-size: 6.5px;
    color: #8d9099;
}
.confirm {
    width: 73px;
    margin-left: 5px;
}
.result-head {
    display: flex;
    align-items: center;
    justify-content: space-between;
    margin-top: 17px;
    padding: 16px 14px 0 8px;
    border-top: 1px solid #e6e9f0;
}
.result-head h2 {
    font-size: 11px;
    letter-spacing: .2px;
    color: #1c1f26;
}
.member {
    width: 74px;
}
.result-body {
    display: flex;
    margin-top: 6px;
    padding-left: 8px;
    height: 87px;
    overflow: hidden;
}
.label-col {
    flex: 0 0 91px;
}
.label-search {
    display: flex;
    align-items: center;
    justify-content: space-between;
    height: 17px;
    padding: 0 5px;
    border-radius: 4px;
    background-color: #eeeff3;
    font-size: 6.2px;
    color: #b5b8c0;
}
.label-clear {
    height: 15px;
    margin-top: 5px;
    border: 1px solid #a9b7f5;
    line-height: 13px;
    text-align: center;
    font-size: 6.8px;
    color: #6b8bd6;
}
.label-title {
    margin-top: 10px;
    line-height: 10px;
    font-size: 8.8px;
    font-weight: 500;
    color: #111;
}
.label-toggle {
    display: flex;
    align-items: center;
    gap: 5px;
    height: 9px;
    margin-top: 2px;
    font-size: 6.8px;
    color: #3f74c4;
}
.toggle {
    position: relative;
    width: 19px;
    height: 9px;
    border-radius: 5px;
    background-color: #2d69bb;
}
.toggle::after {
    content: "";
    position: absolute;
    right: 1px;
    top: 1px;
    width: 7px;
    height: 7px;
    border-radius: 50%;
    background-color: #fff;
}
.label-box {
    height: 20px;
    margin-top: 8px;
    border: 1px solid #dfe1e6;
    border-radius: 3px;
    background-color: #eeeff3;
}
.label-scroll {
    flex: 0 0 8px;
    margin: 0 9px 0 6px;
    padding: 1px 2px 0;
    background-color: #f7f7f9;
}
.label-scroll span {
    display: block;
    width: 3.5px;
    height: 36px;
    border-radius: 2px;
    background-color: #c0c2c8;
}
.result-card {
    flex: 0 0 196px;
    height: 100px;
    margin-right: 7px;
    border: 1px solid #dfe5ef;
    border-radius: 6px;
}
.result-name {
    display: flex;
    align-items: center;
    height: 28px;
    padding: 0 8px 0 12px;
    color: #444;
}
.result-name b {
    margin: 0 3px 0 2px;
    font-size: 9.5px;
    font-weight: 700;
    white-space: nowrap;
}
.result-tools {
    display: flex;
    gap: 7.5px;
    margin-left: auto;
}
.result-chart {
    width: 164px;
    height: 58px;
    margin-left: 14px;
    overflow: hidden;
    background-color: #fafbfd;
}
.result-chart svg {
    display: block;
}
.result-chart.bars {
    margin: 4px 0 0 15px;
}
.legend-text {
    font-family: Roboto, sans-serif;
    font-size: 5.3px;
    fill: #444;
}
.date-row {
    display: flex;
    gap: 4px;
    height: 15px;
    padding-left: 7px;
}
.date-box {
    display: flex;
    align-items: center;
    gap: 3px;
    width: 67px;
    padding-left: 4px;
    border: 1px solid #eceef2;
    font-size: 6px;
    color: #b5b8c0;
    white-space: nowrap;
}
.year-box {
    display: flex;
    align-items: center;
    justify-content: space-between;
    width: 37px;
    padding: 0 5px;
    border: 1px solid #8fa8cf;
    border-radius: 3px;
    font-size: 6.3px;
    color: #666;
}
.bar-year {
    font-family: Roboto, sans-serif;
    font-size: 5.4px;
    fill: #222;
}
.bar-value {
    font-family: Roboto, sans-serif;
    font-size: 5.8px;
    fill: #7d8aa3;
}
.shade-white {
    position: absolute;
    left: 120px;
    top: 424px;
    width: 767px;
    height: 30px;
    box-shadow: 0 0 10px 1px rgba(255, 255, 255, .9);
}
```
